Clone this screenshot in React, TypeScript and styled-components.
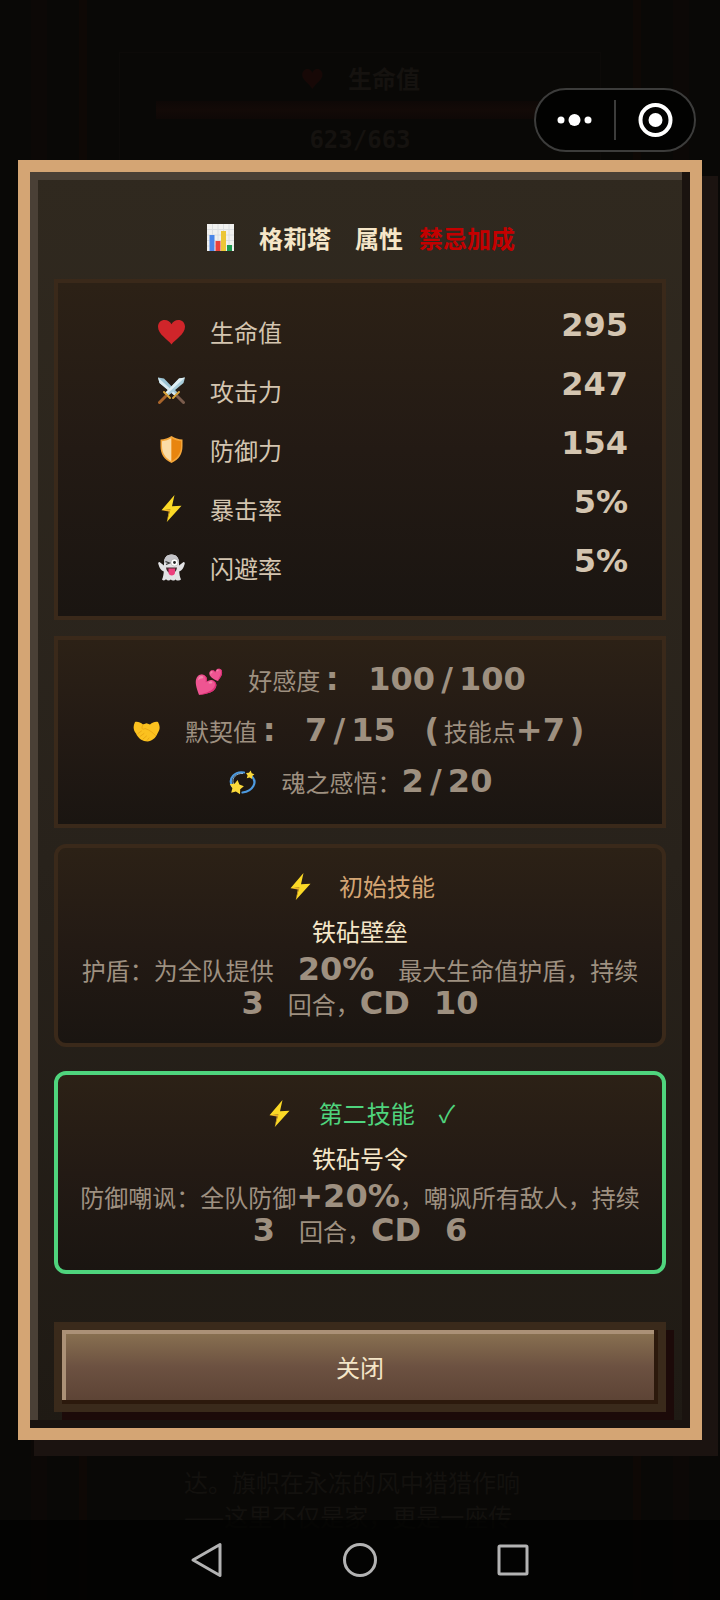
import React from 'react';
import styled, { createGlobalStyle } from 'styled-components';

const GlobalStyle = createGlobalStyle`
  *, *::before, *::after { box-sizing: border-box; }
  body {
    margin: 0;
    background: #090806;
    color: #d4c5b0;
    font: 24px/34px "Noto Sans CJK SC", sans-serif;
  }
  h2, h3, p, dl, dd, dt { margin: 0; font-size: 24px; font-weight: 400; }
`;

const Page = styled.div`
  position: relative;
  min-height: 100vh;
  display: flex;
  flex-direction: column;
  overflow: hidden;
`;

/* Dimmed game screen lying under the dialog */

const Backdrop = styled.div`
  position: absolute;
  inset: 0;
  padding: 0 31px;
  display: flex;
`;

const OuterFrame = styled.div`
  flex: 1;
  display: flex;
  border: solid #0c0806;
  border-width: 0 16px;
  padding: 0 32px;
`;

const InnerFrame = styled.div`
  flex: 1;
  border: solid #0e0805;
  border-width: 0 8px;
  padding: 0 32px;
  display: flex;
  flex-direction: column;
  justify-content: space-between;
`;

const FadedStatus = styled.div`
  margin-top: 52px;
  padding: 10px 36px;
  border: 1px solid #0c0a08;
  text-align: center;
  color: #15120f;
  font-weight: 700;
`;

const FadedLabel = styled.div`
  display: flex;
  justify-content: center;
  align-items: center;
  gap: 24px;
  line-height: 30px;
`;

const FadedHeart = styled.span`
  color: #170806;
`;

const FadedBar = styled.div`
  height: 18px;
  margin: 8px 0 4px;
  background: linear-gradient(#0e0806, #130a07 50%, #0e0806);
`;

const FadedNumber = styled.div`
  font-family: "DejaVu Sans Mono", monospace;
  line-height: 34px;
`;

const FadedStory = styled.p`
  padding-left: 65px;
  margin-bottom: 67px;
  color: #13110e;
  white-space: pre;
`;

const TopBar = styled.header`
  position: relative;
  display: flex;
  justify-content: flex-end;
  padding: 88px 24px 8px;
`;

const Capsule = styled.div`
  display: flex;
  align-items: center;
  width: 162px;
  height: 64px;
  border: 2px solid #3c3c3b;
  border-radius: 32px;
  background: #020201;
`;

const CapsuleButton = styled.button`
  flex: 1;
  display: flex;
  justify-content: center;
  align-items: center;
  height: 40px;
  padding: 0;
  border: 0;
  background: none;

  & + & { border-left: 2px solid #3c3c3b; }
`;

const Dialog = styled.section`
  position: relative;
  margin: 0 18px;
  padding: 24px 24px 16px;
  border: 12px solid #d4a574;
  background: linear-gradient(#30291f, #28221b 55%, #1f1a14);
  box-shadow: inset -8px -8px 0 #1a130f, inset 8px 8px 0 #4a4036, 16px 16px 0 #1b1310;
`;

const Title = styled.h2`
  display: flex;
  justify-content: center;
  align-items: center;
  padding: 24px 0;
  line-height: 35px;
  font-weight: 700;
  color: #f5e6c8;
`;

const TitleWord = styled.span<{ $forbidden?: boolean }>`
  margin-left: ${p => (p.$forbidden ? 16 : 24)}px;
  color: ${p => (p.$forbidden ? '#c40000' : 'inherit')};
`;

const Panel = styled.div`
  border: 4px solid #3a291a;
  background: linear-gradient(#2c2116, #231a14 50%, #1a1511);
`;

const StatList = styled(Panel).attrs({ as: 'dl' })`
  padding: 19px 34px 19px 98px;
`;

const StatRow = styled.div`
  display: flex;
  align-items: center;
  height: 59px;
`;

const StatName = styled.dt`
  display: flex;
  align-items: center;
  gap: 24px;
`;

const Num = styled.span`
  font-family: "DejaVu Sans", sans-serif;
  font-weight: 700;
  font-size: 32px;
  line-height: 24px;
`;

const StatValue = styled(Num).attrs({ as: 'dd' })`
  margin-left: auto;
  padding-bottom: 14px;
  font-size: 32px;
  font-weight: 700;
`;

const BondPanel = styled(Panel)`
  margin-top: 16px;
  padding: 14px 0 17px;
  color: #9e9080;
`;

const BondRow = styled.p`
  display: flex;
  justify-content: center;
  align-items: baseline;
  line-height: 51px;
`;

const BondName = styled.span`
  margin-left: 24px;
`;

const BondValue = styled(Num)<{ $spaced?: boolean }>`
  margin-left: ${p => (p.$spaced ? 24 : 0)}px;
`;

/* Punctuation takes a full character cell, as in a fixed-width face */
const Sign = styled(Num)`
  display: inline-block;
  width: 24px;
  text-align: center;
`;

const OpenBracket = styled(Sign)`
  margin-left: 24px;
`;

const SkillPanel = styled(Panel)<{ $unlocked?: boolean; $gap: number }>`
  margin-top: ${p => p.$gap}px;
  padding: 15px 16px 22px;
  border-color: ${p => (p.$unlocked ? '#4fd47d' : '#3a291a')};
  border-radius: 12px;
  text-align: center;
`;

const SkillHeading = styled.h3<{ $unlocked?: boolean }>`
  display: flex;
  justify-content: center;
  align-items: center;
  gap: 24px;
  line-height: 46px;
  color: ${p => (p.$unlocked ? '#4fd47d' : '#d4a574')};
`;

const SkillName = styled.p`
  line-height: 44px;
  color: #f5e6c8;
`;

const SkillText = styled.p`
  color: #9e9080;
`;

const SpacedNum = styled(Num)<{ $before?: boolean; $after?: boolean }>`
  margin-left: ${p => (p.$before ? 24 : 0)}px;
  margin-right: ${p => (p.$after ? 24 : 0)}px;
`;

const CloseButton = styled.button`
  display: block;
  width: 100%;
  height: 90px;
  margin-top: 48px;
  padding: 0;
  border: 8px solid #3a2a1b;
  background: linear-gradient(#8b7352, #6c5141 50%, #5b4234);
  box-shadow: inset -4px -4px 0 #2c190c, inset 4px 4px 0 #ab9177, 8px 8px 0 #1c0a09;
  color: #f5e6c8;
  font: inherit;
`;

const IconCell = styled.span`
  flex: none;
  display: inline-flex;
  justify-content: center;
  align-items: center;
  width: 30px;
  height: 30px;
  align-self: center;
  line-height: 30px;
`;

const NavBar = styled.nav`
  position: relative;
  display: flex;
  justify-content: center;
  align-items: center;
  gap: 102px;
  height: 80px;
  margin-top: auto;
  background: rgba(3, 2, 1, 0.8);
`;

const NavButton = styled.button`
  display: flex;
  justify-content: center;
  align-items: center;
  width: 51px;
  height: 48px;
  padding: 0;
  border: 0;
  background: none;
`;

type IconName =
  | 'chart' | 'heart' | 'swords' | 'shield' | 'bolt'
  | 'ghost' | 'hearts' | 'handshake' | 'dizzy';

const emoji: Partial<Record<IconName, string>> = { hearts: '💕' };

const star = (x: number, y: number, r: number) =>
  Array.from({ length: 10 }, (_, i) => {
    const a = (Math.PI / 5) * i - Math.PI / 2 + 0.15;
    const d = i % 2 ? r * 0.55 : r;
    return `${(x + Math.cos(a) * d).toFixed(1)},${(y + Math.sin(a) * d).toFixed(1)}`;
  }).join(' ');

const drawings: Partial<Record<IconName, React.ReactNode>> = {
  chart: (
    <>
      <rect width="27" height="27" fill="#f1f1ef" />
      <path d="M0 5.5H27M0 11H27M0 16.5H27M0 22H27M5.5 0V27M11 0V27M16.5 0V27M22 0V27" stroke="#dcdfe1" />
      <rect x="2.5" y="11" width="5" height="16" fill="#4a86e8" />
      <rect x="8.5" y="17" width="5" height="10" fill="#e8413c" />
      <rect x="14" y="7" width="5" height="20" fill="#ecc636" />
      <rect x="20" y="21" width="5" height="6" fill="#1d9a50" />
    </>
  ),
  heart: (
    <path d="M13.5 26.5C10 21.5 0 16.5 0 8.8C0 4.5 3 2 6.6 2C9.7 2 12.3 3.7 13.5 6.3C14.7 3.7 17.3 2 20.4 2C24 2 27 4.5 27 8.8C27 16.5 17 21.5 13.5 26.5Z" fill="#d0252a" />
  ),
  swords: (
    <>
      <path d="M0 0.5L6 1.5L19.5 15.5L16.5 18.5L1.5 6Z" fill="#9cc4d4" />
      <path d="M0 0.5L18 17L16.5 18.5L1.5 6Z" fill="#d8eaf0" />
      <path d="M27 0.5L21 1.5L7.5 15.5L10.5 18.5L25.5 6Z" fill="#a9cdda" />
      <path d="M27 0.5L21 1.5L7.5 15.5L9 17Z" fill="#e0eff3" />
      <path d="M6 15L12 21M21 15L15 21" stroke="#d9a53a" strokeWidth="2" strokeLinecap="round" />
      <path d="M7.5 19.5L1.5 25.5" stroke="#a8642a" strokeWidth="3" strokeLinecap="round" />
      <path d="M19.5 19.5L25.5 25.5" stroke="#7a5c4c" strokeWidth="3" strokeLinecap="round" />
    </>
  ),
  shield: (
    <>
      <path d="M13.5 0C10 2.5 6.5 3.3 2.5 3.5V10C2.5 18 6 23.5 13.5 27C21 23.5 24.5 18 24.5 10V3.5C20.5 3.3 17 2.5 13.5 0Z" fill="#f4a63a" />
      <path d="M13.5 2C10.5 4 7.5 4.9 4 5.2V10C4 17.2 7.5 22 13.5 25.2Z" fill="#fbdca6" />
      <path d="M13.5 2C16.5 4 19.5 4.9 23 5.2V10C23 17.2 19.5 22 13.5 25.2Z" fill="#e8850f" />
    </>
  ),
  bolt: (
    <>
      <path d="M16.5 0L3.5 15.2L12.3 14.4L8.8 27L23.5 10.8L14 11.3Z" fill="#fbd926" />
      <path d="M3.5 15.2L12.3 14.4L8.8 27L10.8 16.5Z" fill="#f0b42a" />
    </>
  ),
  ghost: (
    <>
      <path d="M13.5 0.5C8.5 0.5 6 4 6 9V11.5L1.5 8C0 8 0 9.5 0.5 10.5C1.5 14 3 16.5 5.8 17.5C5.5 21 5 23.5 4 25.5C5.5 27 7 26.5 8 25.3C9.5 27 11.5 27 12.8 25.5C14 27 16 27 17.5 25.4C19 27 21.5 27 23 25.5C21.8 23 21.5 20.5 21.2 17.5C24 16.5 25.5 14 26.5 10.5C27 9.5 27 8 25.5 8L21 11.5V9C21 4 18.5 0.5 13.5 0.5Z" fill="#e2e2e4" />
      <path d="M13.5 0.5C8.5 0.5 6 4 6 9H21C21 4 18.5 0.5 13.5 0.5Z" fill="#c4c4c8" />
      <circle cx="16.5" cy="8.5" r="3.6" fill="#fff" stroke="#aaa" strokeWidth="0.6" />
      <circle cx="16.5" cy="8.5" r="1.4" fill="#222" />
      <path d="M7.5 7.5L11.5 9L8 10.5" fill="none" stroke="#333" strokeWidth="1.2" />
      <path d="M8 13.5H19C18.5 17 17 19 13.5 19S8.5 17 8 13.5Z" fill="#4a2a30" />
      <path d="M10.5 14.5H17V18.5C17 22.5 10.5 22.5 10.5 18.5Z" fill="#ec3f7d" />
    </>
  ),
  handshake: (
    <>
      <path d="M2 5C5 4.5 7.5 5.5 10 7.5L13.5 6.3L17 7.5C19.5 5.5 22 4.5 25 5C27 9 27.5 12 24.5 16.5C23 21 18.5 24 14.5 24.5C10 24.5 5 21.5 3 16.5C0 13 0 9 2 5Z" fill="#fbc11f" />
      <path d="M10 7.5C8 11 9 13.5 12 11.5C17 13 20 16 22.5 18.5M5 16.5L8.5 14M7 19.5L11 16.5M10 22L13.5 19M14 23.5L16 21" fill="none" stroke="#eba914" strokeWidth="1" strokeLinecap="round" />
    </>
  ),
  dizzy: (
    <>
      <path d="M3 18C-1 10 6 3 15 4.5M22.5 8C29 14 24 23 13.5 24.5" fill="none" stroke="#4d9ae0" strokeWidth="2.2" strokeLinecap="round" />
      <path d="M4.5 16C2 10 7.5 5 14 5.5" fill="none" stroke="#a8d4f5" strokeWidth="0.8" />
      <polygon points={star(7.5, 19.5, 7.5)} fill="#fbd93a" />
      <polygon points={star(21, 7, 4.5)} fill="#fbd93a" />
    </>
  ),
};

const Icon = ({ name }: { name: IconName }) => (
  <IconCell aria-hidden="true">
    {emoji[name] ?? <svg width="27" height="27" viewBox="0 0 27 27">{drawings[name]}</svg>}
  </IconCell>
);

const Ratio = ({ value, total, spaced }: { value: number; total: number; spaced?: boolean }) => (
  <BondValue $spaced={spaced}>{value}<Sign>/</Sign>{total}</BondValue>
);

const stats: { icon: IconName; name: string; value: string }[] = [
  { icon: 'heart', name: '生命值', value: '295' },
  { icon: 'swords', name: '攻击力', value: '247' },
  { icon: 'shield', name: '防御力', value: '154' },
  { icon: 'bolt', name: '暴击率', value: '5%' },
  { icon: 'ghost', name: '闪避率', value: '5%' },
];

export default function App() {
  return (
    <Page>
      <GlobalStyle />
      <Backdrop aria-hidden="true">
        <OuterFrame>
          <InnerFrame>
            <FadedStatus>
              <FadedLabel><FadedHeart>♥</FadedHeart>生命值</FadedLabel>
              <FadedBar />
              <FadedNumber>623/663</FadedNumber>
            </FadedStatus>
            <FadedStory>{'达。旗帜在永冻的风中猎猎作响\n——这里不仅是家，更是一座传'}</FadedStory>
          </InnerFrame>
        </OuterFrame>
      </Backdrop>

      <TopBar>
        <Capsule>
          <CapsuleButton aria-label="更多">
            <svg width="36" height="16" viewBox="0 0 36 16" fill="#fff">
              <circle cx="4" cy="8" r="3.5" />
              <circle cx="17.5" cy="8" r="6" />
              <circle cx="31" cy="8" r="3.5" />
            </svg>
          </CapsuleButton>
          <CapsuleButton aria-label="退出">
            <svg width="36" height="36" viewBox="0 0 36 36">
              <circle cx="18.5" cy="18" r="15" fill="none" stroke="#fff" strokeWidth="4" />
              <circle cx="18.5" cy="18" r="7" fill="#fff" />
            </svg>
          </CapsuleButton>
        </Capsule>
      </TopBar>

      <Dialog role="dialog" aria-labelledby="dialog-title">
        <Title id="dialog-title">
          <Icon name="chart" />
          <TitleWord>格莉塔</TitleWord>
          <TitleWord>属性</TitleWord>
          <TitleWord $forbidden>禁忌加成</TitleWord>
        </Title>

        <StatList>
          {stats.map(s => (
            <StatRow key={s.name}>
              <StatName><Icon name={s.icon} />{s.name}</StatName>
              <StatValue>{s.value}</StatValue>
            </StatRow>
          ))}
        </StatList>

        <BondPanel>
          <BondRow>
            <Icon name="hearts" />
            <BondName>好感度</BondName>
            <Sign>:</Sign>
            <Ratio spaced value={100} total={100} />
          </BondRow>
          <BondRow>
            <Icon name="handshake" />
            <BondName>默契值</BondName>
            <Sign>:</Sign>
            <Ratio spaced value={7} total={15} />
            <OpenBracket>(</OpenBracket>
            <span>技能点</span>
            <BondValue>+7<Sign>)</Sign></BondValue>
          </BondRow>
          <BondRow>
            <Icon name="dizzy" />
            <BondName>魂之感悟：</BondName>
            <Ratio value={2} total={20} />
          </BondRow>
        </BondPanel>

        <SkillPanel $gap={16}>
          <SkillHeading><Icon name="bolt" />初始技能</SkillHeading>
          <SkillName>铁砧壁垒</SkillName>
          <SkillText>
            护盾：为全队提供<SpacedNum $before $after>20%</SpacedNum>最大生命值护盾，持续{' '}
            <SpacedNum $after>3</SpacedNum>回合，<Num>CD</Num>
            <SpacedNum $before>10</SpacedNum>
          </SkillText>
        </SkillPanel>

        <SkillPanel $gap={24} $unlocked>
          <SkillHeading $unlocked><Icon name="bolt" />第二技能<span>✓</span></SkillHeading>
          <SkillName>铁砧号令</SkillName>
          <SkillText>
            防御嘲讽：全队防御<Num>+20%</Num>，嘲讽所有敌人，持续{' '}
            <SpacedNum $after>3</SpacedNum>回合，<Num>CD</Num>
            <SpacedNum $before>6</SpacedNum>
          </SkillText>
        </SkillPanel>

        <CloseButton>关闭</CloseButton>
      </Dialog>

      <NavBar>
        <NavButton aria-label="返回">
          <svg width="34" height="36" viewBox="0 0 34 36">
            <path d="M30 2.5V33.5L3 18Z" fill="none" stroke="#b3b3b3" strokeWidth="3" strokeLinejoin="round" />
          </svg>
        </NavButton>
        <NavButton aria-label="主页">
          <svg width="36" height="36" viewBox="0 0 36 36">
            <circle cx="18" cy="18" r="15.5" fill="none" stroke="#b3b3b3" strokeWidth="3" />
          </svg>
        </NavButton>
        <NavButton aria-label="最近任务">
          <svg width="34" height="34" viewBox="0 0 34 34">
            <rect x="3" y="3" width="28" height="28" rx="1" fill="none" stroke="#b3b3b3" strokeWidth="3" />
          </svg>
        </NavButton>
      </NavBar>
    </Page>
  );
}
